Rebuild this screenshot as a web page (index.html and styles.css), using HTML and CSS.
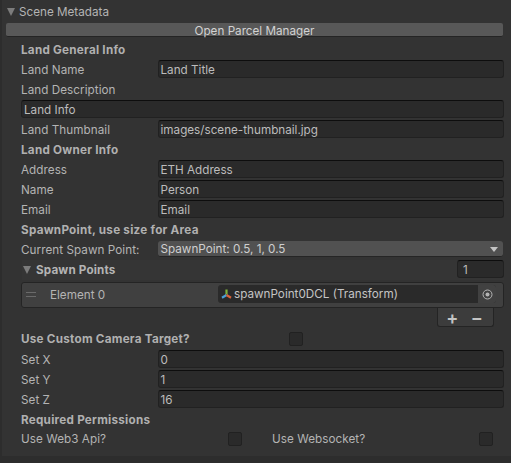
FILE: index.html

```html
<!DOCTYPE html>
<html lang="en">
<head>
    <meta charset="UTF-8">
    <meta name="viewport" content="width=device-width, initial-scale=1.0">
    <title>Scene Metadata</title>
    <link rel="stylesheet" href="styles.css">
</head>
<body>
    <div class="panel">
        <div class="title-row">
            <span class="arrow"></span>
            <span>Scene Metadata</span>
        </div>
        <div class="button-row">
            <div class="button">Open Parcel Manager</div>
        </div>
        <div class="content">
            <div class="row bold">Land General Info</div>
            <div class="row"><label>Land Name</label><div class="field">Land Title</div></div>
            <div class="row">Land Description</div>
            <div class="row"><div class="field">Land Info</div></div>
            <div class="row"><label>Land Thumbnail</label><div class="field">images/scene-thumbnail.jpg</div></div>
            <div class="row bold">Land Owner Info</div>
            <div class="row"><label>Address</label><div class="field">ETH Address</div></div>
            <div class="row"><label>Name</label><div class="field">Person</div></div>
            <div class="row"><label>Email</label><div class="field">Email</div></div>
            <div class="row bold">SpawnPoint, use size for Area</div>
            <div class="row">
                <label>Current Spawn Point:</label>
                <div class="dropdown"><span>SpawnPoint: 0.5, 1, 0.5</span><span class="drop-arrow"></span></div>
            </div>
            <div class="row list-header">
                <span class="arrow"></span>
                <span class="list-title">Spawn Points</span>
                <div class="field size-field">1</div>
            </div>
            <div class="list-box">
                <span class="handle"></span>
                <span class="element-label">Element 0</span>
                <div class="object-field">
                    <svg class="transform-icon" width="11" height="11" viewBox="0 0 11 11">
                        <path d="M5.5 0.5v5" stroke="#7fb33c" stroke-width="2.2" fill="none"/>
                        <path d="M5.5 6l-4.5 2.8" stroke="#4b9fd5" stroke-width="2.2" fill="none"/>
                        <path d="M5.5 6l4.5 2.8" stroke="#d9633a" stroke-width="2.2" fill="none"/>
                    </svg>
                    <span class="object-name">spawnPoint0DCL (Transform)</span>
                    <span class="picker">
                        <svg width="11" height="11" viewBox="0 0 11 11">
                            <circle cx="5.5" cy="5.5" r="4.5" stroke="#b4b4b4" fill="none"/>
                            <circle cx="5.5" cy="5.5" r="2" fill="#b4b4b4"/>
                        </svg>
                    </span>
                </div>
            </div>
            <div class="list-footer-wrap">
                <div class="list-footer"><span>+</span><span>−</span></div>
            </div>
            <div class="row bold camera-row">
                <span class="check-label">Use Custom Camera Target?</span>
                <span class="checkbox"></span>
            </div>
            <div class="row"><label>Set X</label><div class="field">0</div></div>
            <div class="row"><label>Set Y</label><div class="field">1</div></div>
            <div class="row"><label>Set Z</label><div class="field">16</div></div>
            <div class="row bold">Required Permissions</div>
            <div class="row perms">
                <div class="perm"><label>Use Web3 Api?</label><span class="checkbox"></span></div>
                <div class="perm"><label>Use Websocket?</label><span class="checkbox"></span></div>
            </div>
        </div>
    </div>
</body>
</html>
```

FILE: styles.css

```css
html, body { margin: 0; padding: 0; height: 100%; background: #2d2d2d; overflow: hidden; }
body { font-family: Inter, "Liberation Sans", sans-serif; font-size: 11.7px; color: #b4b4b4; }
.panel { margin-left: 2px; height: 456px; background: #333333; box-sizing: border-box; padding-top: 1px; }

.title-row { display: flex; align-items: center; height: 20px; box-sizing: border-box; padding: 2px 0 0 5px; gap: 4px; }
.arrow { width: 0; height: 0; border-left: 4.5px solid transparent; border-right: 4.5px solid transparent; border-top: 8px solid #7c7c7c; }

.button-row { padding: 2px 8px 0 4px; height: 19px; box-sizing: border-box; }
.button { height: 13px; line-height: 16px; background: #585858; border-radius: 2px; border-bottom: 1px solid #242424; color: #d2d2d2; text-align: center; }

.content { padding: 0 7px 0 19px; }
.row { display: flex; align-items: flex-start; height: 20px; line-height: 20px; white-space: nowrap; letter-spacing: 0.05px; }
.row label { width: 136.5px; flex: none; }
.bold { font-weight: 700; color: #b0b0b0; letter-spacing: 0.25px; }

.field { flex: 1; height: 18px; line-height: 18px; box-sizing: border-box; padding-left: 2px; background: #2a2a2a; border: 1px solid #212121; border-top-color: #0d0d0d; border-radius: 3px; color: #bcbcbc; letter-spacing: 0; }

.dropdown { flex: 1; height: 15px; line-height: 16px; margin: 1px 1px 0 0; display: flex; justify-content: space-between; padding: 0 5px 0 3px; background: #515151; border-radius: 3px; border-bottom: 1px solid #252525; color: #cfcfcf; letter-spacing: 0; }
.drop-arrow { width: 0; height: 0; margin-top: 6px; border-left: 4px solid transparent; border-right: 4px solid transparent; border-top: 5px solid #c4c4c4; }

.list-header { margin-left: 1px; gap: 5px; background: #353535; }
.list-header .arrow { margin: 6px 0 0 1px; }
.list-title { font-weight: 700; flex: 1; letter-spacing: 0.15px; }
.size-field { flex: none; width: 47px; padding-left: 5px; }

.list-box { display: flex; align-items: center; height: 26px; margin-top: 2px; background: #404040; border: 1px solid #242424; border-radius: 3px; box-sizing: border-box; }
.handle { width: 10px; height: 3px; margin: -2px 0 0 4px; border-top: 1px solid #6a6a6a; border-bottom: 1px solid #6a6a6a; }
.element-label { width: 168px; margin-left: 14px; }
.object-field { flex: 1; display: flex; align-items: center; height: 18px; margin: -2px 7px 0 0; background: #2a2a2a; border-radius: 3px; color: #c4c4c4; }
.transform-icon { margin: 0 2px 0 3px; flex: none; }
.object-name { flex: 1; }
.picker { display: flex; align-items: center; justify-content: center; width: 18px; height: 18px; background: #414141; border-radius: 0 3px 3px 0; }

.list-footer-wrap { display: flex; justify-content: flex-end; height: 21px; }
.list-footer { display: flex; justify-content: space-around; align-items: center; width: 57px; height: 19px; margin-right: 10px; box-sizing: border-box; padding: 0 4px 0 2px; background: #3c3c3c; border: 1px solid #242424; border-top: none; border-radius: 0 0 3px 3px; font-size: 18px; font-weight: 600; color: #c4c4c4; }

.camera-row { margin-bottom: 1px; }
.check-label { width: 268px; flex: none; }
.checkbox { flex: none; width: 14px; height: 14px; margin-top: 3px; box-sizing: border-box; background: #2a2a2a; border: 1px solid #212121; border-radius: 2px; }

.perms { gap: 30px; margin-top: -1px; }
.perm { display: flex; flex: none; width: 221px; }
.perm label { flex: 1; width: auto; }
```
